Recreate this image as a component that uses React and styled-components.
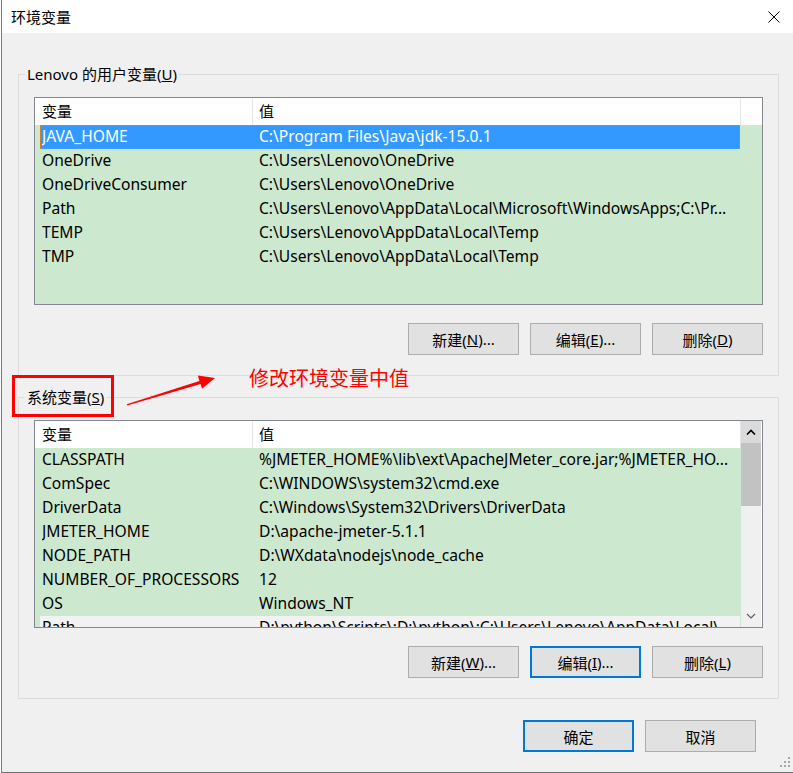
import React from 'react'
import styled, { createGlobalStyle } from 'styled-components'

const GlobalStyle = createGlobalStyle`
  html, body {
    margin: 0;
    padding: 0;
    background: #ffffff;
  }
  body {
    font-family: "Noto Sans", "Noto Sans CJK SC", sans-serif;
    font-size: 15px;
    color: #000000;
  }
`;

const userVars = [
    ['JAVA_HOME', 'C:\\Program Files\\Java\\jdk-15.0.1'],
    ['OneDrive', 'C:\\Users\\Lenovo\\OneDrive'],
    ['OneDriveConsumer', 'C:\\Users\\Lenovo\\OneDrive'],
    ['Path', 'C:\\Users\\Lenovo\\AppData\\Local\\Microsoft\\WindowsApps;C:\\Pr...'],
    ['TEMP', 'C:\\Users\\Lenovo\\AppData\\Local\\Temp'],
    ['TMP', 'C:\\Users\\Lenovo\\AppData\\Local\\Temp'],
];

const systemVars = [
    ['CLASSPATH', '%JMETER_HOME%\\lib\\ext\\ApacheJMeter_core.jar;%JMETER_HO...'],
    ['ComSpec', 'C:\\WINDOWS\\system32\\cmd.exe'],
    ['DriverData', 'C:\\Windows\\System32\\Drivers\\DriverData'],
    ['JMETER_HOME', 'D:\\apache-jmeter-5.1.1'],
    ['NODE_PATH', 'D:\\WXdata\\nodejs\\node_cache'],
    ['NUMBER_OF_PROCESSORS', '12'],
    ['OS', 'Windows_NT'],
    ['Path', 'D:\\python\\Scripts\\;D:\\python\\;C:\\Users\\Lenovo\\AppData\\Local\\...'],
];

function VarList ({ rows, selected, scroll }) {
    return (
        <List>
            <ListMain>
                <Header $fill={!scroll}>
                    <HeadCell>变量</HeadCell>
                    <HeadCell $value>值</HeadCell>
                </Header>
                {rows.map(([name, value], i) => (
                    <Row key={name + i} $selected={i === selected} $cut={scroll && i === rows.length - 1}>
                        <Cell>{name}</Cell>
                        <Cell>{value}</Cell>
                    </Row>
                ))}
            </ListMain>
            {scroll && (
                <ScrollBar>
                    <ScrollButton $active>
                        <svg width="10" height="6" viewBox="0 0 10 6">
                            <polyline points="1,5.5 5,1.5 9,5.5" fill="none" stroke="#000" strokeWidth="1.6" />
                        </svg>
                    </ScrollButton>
                    <Thumb />
                    <Track />
                    <ScrollButton>
                        <svg width="10" height="6" viewBox="0 0 10 6">
                            <polyline points="1,1 5,5 9,1" fill="none" stroke="#606060" strokeWidth="1.2" />
                        </svg>
                    </ScrollButton>
                </ScrollBar>
            )}
        </List>
    )
}

function App () {
    return (
        <>
            <GlobalStyle />
            <Window>
                <TitleBar>
                    <Title>环境变量</Title>
                    <svg width="12" height="12" viewBox="0 0 12 12">
                        <path d="M0.5 0.5 L11.5 11.5 M11.5 0.5 L0.5 11.5" stroke="#000" strokeWidth="1" />
                    </svg>
                </TitleBar>
                <Body>
                    <Group>
                        <Legend>Lenovo 的用户变量(<u>U</u>)</Legend>
                        <VarList rows={userVars} selected={0} />
                        <ButtonRow>
                            <Button>新建(<u>N</u>)...</Button>
                            <Button>编辑(<u>E</u>)...</Button>
                            <Button>删除(<u>D</u>)</Button>
                        </ButtonRow>
                    </Group>
                    <Group $gap>
                        <Legend>系统变量(<u>S</u>)</Legend>
                        <VarList rows={systemVars} selected={-1} scroll />
                        <ButtonRow>
                            <Button>新建(<u>W</u>)...</Button>
                            <Button $focused>编辑(<u>I</u>)...</Button>
                            <Button>删除(<u>L</u>)</Button>
                        </ButtonRow>
                    </Group>
                    <Footer>
                        <Button $focused>确定</Button>
                        <Button>取消</Button>
                    </Footer>
                </Body>
                <Annotations>
                    <RedBox />
                    <Note>修改环境变量中值</Note>
                    <svg width="793" height="773" viewBox="0 0 793 773">
                        <polygon
                            points="126.8,404.3 199.4,381.1 197.9,375.6 215,378 202,388.8 200.5,384.1 127.2,405.6"
                            fill="#ff0000"
                        />
                        <g fill="#a8a8a8">
                            <rect x="788" y="757" width="2" height="2" />
                            <rect x="788" y="761" width="2" height="2" />
                            <rect x="784" y="761" width="2" height="2" />
                            <rect x="788" y="765" width="2" height="2" />
                            <rect x="784" y="765" width="2" height="2" />
                            <rect x="780" y="765" width="2" height="2" />
                        </g>
                    </svg>
                </Annotations>
            </Window>
        </>
    )
}

const Window = styled.div`
    position: relative;
    box-sizing: border-box;
    width: 792px;
    height: 773px;
    margin-left: 1px;
    border-left: 1px solid #7a7a7a;
    border-bottom: 1px solid #707070;
    display: flex;
    flex-direction: column;
    background-color: #f0f0f0;
`;

const TitleBar = styled.div`
    height: 33px;
    flex-shrink: 0;
    background-color: #ffffff;
    display: flex;
    align-items: center;
    justify-content: space-between;
    padding: 0 13px 0 9px;
`;

const Title = styled.div`
    font-size: 15px;
    line-height: 20px;
    padding-top: 1px;
`;

const Body = styled.div`
    flex: 1;
    display: flex;
    flex-direction: column;
    padding: 41px 0 0 16px;
`;

const Group = styled.div`
    position: relative;
    box-sizing: border-box;
    width: 761px;
    margin-top: ${(props) => (props.$gap ? '21px' : '0')};
    border: 1px solid #dcdcdc;
    padding: 22px 15px 20px 15px;
`;

const Legend = styled.div`
    position: absolute;
    left: 6px;
    top: -11px;
    padding: 0 2px;
    line-height: 20px;
    background-color: #f0f0f0;
    white-space: nowrap;
`;

const List = styled.div`
    box-sizing: border-box;
    height: 208px;
    border: 1px solid #828790;
    background-color: #cce8cf;
    display: flex;
    overflow: hidden;
`;

const ListMain = styled.div`
    flex: 1;
    min-width: 0;
    display: flex;
    flex-direction: column;
`;

const Header = styled.div`
    flex-shrink: 0;
    height: 27px;
    background-color: #ffffff;
    display: grid;
    grid-template-columns: 218px 488px ${(props) => (props.$fill ? '1fr' : '')};
`;

const HeadCell = styled.div`
    box-sizing: border-box;
    border-right: 1px solid #e5e5e5;
    padding-left: ${(props) => (props.$value ? '6px' : '7px')};
    line-height: 27px;
`;

const Row = styled.div`
    flex-shrink: 0;
    box-sizing: border-box;
    width: 700px;
    height: 24px;
    margin-left: 5px;
    padding-left: 2px;
    display: grid;
    grid-template-columns: 217px 1fr;
    align-items: start;
    background-color: ${(props) => (props.$selected ? '#3399ff' : props.$cut ? '#f2f2f2' : 'transparent')};
    color: ${(props) => (props.$selected ? '#ffffff' : '#000000')};
    outline: ${(props) => (props.$selected ? '1px dotted #d9822b' : 'none')};
    outline-offset: -1px;
`;

const Cell = styled.div`
    white-space: nowrap;
    overflow: hidden;
    font-size: 15.6px;
    line-height: 22px;
`;

const ScrollBar = styled.div`
    width: 21px;
    flex-shrink: 0;
    display: flex;
    flex-direction: column;
    background-color: #f0f0f0;
    border-right: 1px solid #ffffff;
    box-sizing: border-box;
`;

const ScrollButton = styled.div`
    height: 22px;
    flex-shrink: 0;
    display: flex;
    align-items: center;
    justify-content: center;
    background-color: ${(props) => (props.$active ? '#dadada' : '#f0f0f0')};
`;

const Thumb = styled.div`
    height: 63px;
    flex-shrink: 0;
    background-color: #c2c2c2;
`;

const Track = styled.div`
    flex: 1;
`;

const ButtonRow = styled.div`
    display: flex;
    justify-content: flex-end;
    gap: 11px;
    margin-top: 18px;
`;

const Footer = styled.div`
    display: flex;
    justify-content: flex-end;
    gap: 11px;
    margin-top: 21px;
    padding-right: 37px;
`;

const Button = styled.div`
    box-sizing: border-box;
    width: 111px;
    height: 32px;
    display: flex;
    align-items: center;
    justify-content: center;
    background-color: #e1e1e1;
    border: ${(props) => (props.$focused ? '2px solid #0078d7' : '1px solid #adadad')};
    font-size: 15px;
    white-space: nowrap;
`;

const Annotations = styled.div`
    position: absolute;
    left: -2px;
    top: 0;
    width: 793px;
    height: 773px;
    pointer-events: none;

    & > svg {
        position: absolute;
        left: 0;
        top: 0;
    }
`;

const RedBox = styled.div`
    position: absolute;
    left: 12px;
    top: 375px;
    width: 102px;
    height: 42px;
    box-sizing: border-box;
    border: 3px solid #ff0000;
`;

const Note = styled.div`
    position: absolute;
    left: 249px;
    top: 365px;
    font-family: "Noto Sans CJK SC", sans-serif;
    font-size: 20px;
    line-height: 26px;
    color: #ff0000;
    white-space: nowrap;
`;

export default App;
